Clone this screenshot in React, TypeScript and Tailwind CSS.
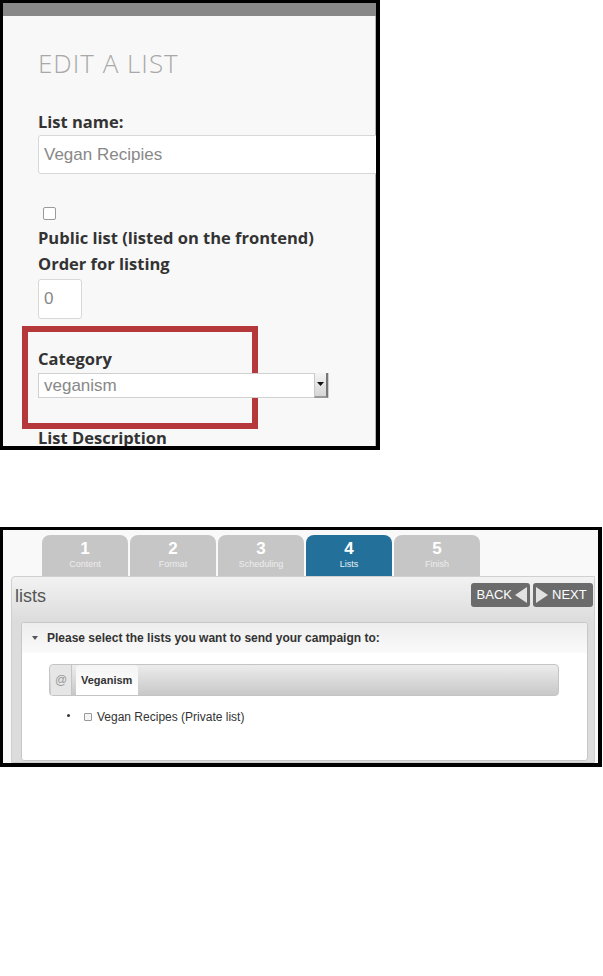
import React from 'react';

const steps = [
  { n: '1', label: 'Content' },
  { n: '2', label: 'Format' },
  { n: '3', label: 'Scheduling' },
  { n: '4', label: 'Lists', active: true },
  { n: '5', label: 'Finish' },
];

function EditList() {
  return (
    <div className="w-[380px] h-[450px] border-[3px] border-r-4 border-b-4 border-black bg-[#f8f8f8] overflow-hidden flex flex-col font-['Open_Sans',sans-serif]">
      <div className="h-[13px] bg-[#888888] shrink-0" />
      <div className="flex-1 border-r border-b border-[#b5b5b5] pl-[35px] pt-[31px] flex flex-col items-start">
        <h1 className="text-[26px] leading-[32px] text-[#a8a8a8] font-light tracking-[1px]">EDIT A LIST</h1>
        <label className="mt-[32px] text-[16.5px] leading-[22px] font-bold text-[#333]">List name:</label>
        <div className="mt-[2px] w-[360px] h-[39px] shrink-0 bg-white border border-[#d8d8d8] rounded-[3px] flex items-center pl-[5px] text-[17px] text-[#888] font-['Liberation_Sans',Arial,sans-serif]">
          Vegan Recipies
        </div>
        <span className="mt-[33px] ml-[5px] w-[13px] h-[13px] border border-[#9a9a9a] rounded-[2px] bg-white" />
        <label className="mt-[7px] text-[16.5px] leading-[22px] font-bold text-[#333]">Public list (listed on the frontend)</label>
        <label className="mt-[4px] text-[16.5px] leading-[22px] font-bold text-[#333]">Order for listing</label>
        <div className="mt-[4px] w-[44px] h-[40px] bg-white border border-[#d8d8d8] rounded-[3px] flex items-center pl-[5px] text-[17px] text-[#888] font-['Liberation_Sans',Arial,sans-serif]">
          0
        </div>
        <div className="mt-[7px] -ml-[16px] w-[236px] border-[6px] border-[#b5383a] pl-[10px] pt-[16px] pb-[25px]">
          <label className="block text-[16.5px] leading-[22px] font-bold text-[#333]">Category</label>
          <div className="mt-[3px] w-[291px] h-[25px] bg-white border border-[#d0d0d0] flex items-center text-[17px] text-[#888] font-['Liberation_Sans',Arial,sans-serif]">
            <span className="pl-[5px] flex-1">veganism</span>
            <span className="w-[14px] h-[25px] -mt-[1px] bg-gradient-to-b from-[#f4f4f4] to-[#d6d6d6] border-l border-[#c8c8c8] border-r-2 border-b-2 border-r-[#777] border-b-[#999] flex items-center justify-center">
              <svg width="7" height="4" viewBox="0 0 7 4"><path d="M0 0h7L3.5 4z" fill="#111" /></svg>
            </span>
          </div>
        </div>
        <label className="-mt-[2px] text-[16.5px] leading-[22px] font-bold text-[#333]">List Description</label>
      </div>
    </div>
  );
}

function Campaign() {
  return (
    <div className="mt-[77px] w-[602px] h-[240px] border-[3px] border-r-4 border-b-4 border-black bg-[#f9f9f9] overflow-hidden flex flex-col font-['Liberation_Sans',Arial,sans-serif]">
      <div className="flex gap-[2px] pl-[39px] pt-[5px] shrink-0">
        {steps.map((s) => (
          <div
            key={s.n}
            className={
              'w-[86px] h-[41px] rounded-t-[8px] flex flex-col items-center pt-[5px] text-white ' +
              (s.active ? 'bg-[#23719a]' : 'bg-[#c6c6c6]')
            }
          >
            <span className="text-[17px] leading-[18px] font-bold">{s.n}</span>
            <span className={'text-[9px] leading-[12px] ' + (s.active ? 'text-[#e8f1f6]' : 'text-[#ededed]')}>{s.label}</span>
          </div>
        ))}
      </div>
      <div className="flex-1 ml-[8px] mr-[3px] border border-[#d0d0d0] rounded-tl-[4px] bg-gradient-to-b from-[#f2f2f2] to-[#dcdcdc] to-[45px] flex flex-col pl-[9px] pr-[6px] pt-[6px]">
        <div className="flex items-start justify-between">
          <span className="ml-[-6px] text-[18px] leading-[22px] text-[#555] mt-[2px]">lists</span>
          <div className="flex gap-[3px] mr-[-5px]">
            <div className="w-[59px] h-[24px] rounded-[3px] bg-[#6b6b6b] flex items-center justify-end pr-[3px] gap-[3px] text-white text-[13px]">
              <span>BACK</span>
              <svg width="12" height="16" viewBox="0 0 12 16"><path d="M12 0v16L0 8z" fill="#e2e2e2" /></svg>
            </div>
            <div className="w-[60px] h-[24px] rounded-[3px] bg-[#6b6b6b] flex items-center pl-[3px] gap-[4px] text-white text-[13px]">
              <svg width="12" height="16" viewBox="0 0 12 16"><path d="M0 0v16L12 8z" fill="#e2e2e2" /></svg>
              <span>NEXT</span>
            </div>
          </div>
        </div>
        <div className="mt-[15px] flex-1 mb-[1px] bg-white border border-[#c8c8c8] rounded-[3px] flex flex-col">
          <div className="h-[30px] bg-gradient-to-b from-[#ededed] to-[#fafafa] flex items-center pl-[10px] text-[12px] text-[#333] font-bold rounded-t-[3px]">
            <svg width="6" height="4" viewBox="0 0 6 4" className="mr-[9px]"><path d="M0 0h6L3 4z" fill="#555" /></svg>
            <span>Please select the lists you want to send your campaign to:</span>
          </div>
          <div className="mt-[11px] ml-[27px] w-[510px] h-[32px] rounded-[4px] border border-[#c4c4c4] bg-gradient-to-b from-[#ececec] to-[#c8c8c8] flex items-end px-[1px]">
            <div className="w-[21px] h-[30px] bg-[#e6e6e6] rounded-tl-[3px] border-r border-[#c4c4c4] flex items-center justify-center text-[12px] text-[#999]">@</div>
            <div className="ml-[4px] w-[62px] h-[30px] bg-gradient-to-b from-[#f4f4f4] to-white rounded-t-[4px] flex items-center pl-[5px] text-[11px] font-bold text-[#333]">Veganism</div>
          </div>
          <ul className="mt-[12px] ml-[46px] text-[12px] text-[#333]">
            <li className="ml-[16px] flex items-center gap-[5px] relative">
              <span className="absolute -left-[17px] top-[6px] w-[3px] h-[3px] rounded-full bg-[#333]" />
              <span className="w-[8px] h-[8px] border border-[#999] bg-[#f4f4f4] rounded-[1px]" />
              <span>Vegan Recipes (Private list)</span>
            </li>
          </ul>
        </div>
      </div>
    </div>
  );
}

export default function App() {
  return (
    <div className="w-[603px] h-[976px] bg-white">
      <EditList />
      <Campaign />
    </div>
  );
}
